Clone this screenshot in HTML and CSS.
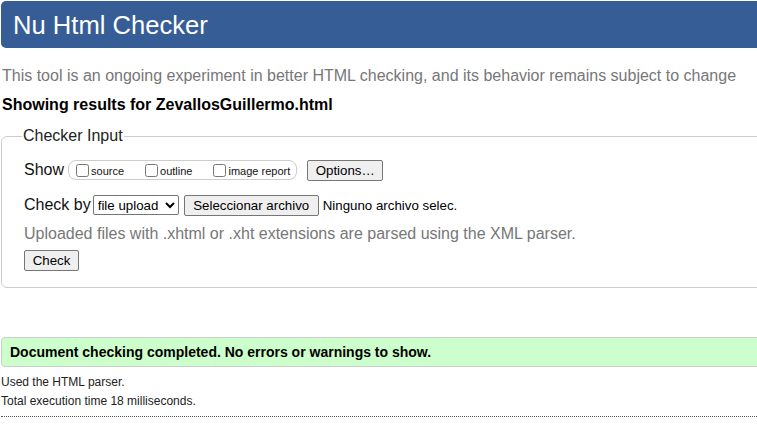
FILE: index.html
```html
<!DOCTYPE html>
<html>
<head>
<meta charset="utf-8">
<link rel="stylesheet" href="styles.css">
</head>
<body>
<div class="page">
  <h1 class="header">Nu Html Checker</h1>
  <p class="intro">This tool is an ongoing experiment in better HTML checking, and its behavior remains subject to change</p>
  <p class="showing">Showing results for ZevallosGuillermo.html</p>
  <fieldset class="input">
    <legend>Checker Input</legend>
    <div class="row show-row">
      <span class="lbl">Show</span>
      <span class="opts">
        <label class="opt"><input type="checkbox">source</label>
        <label class="opt"><input type="checkbox">outline</label>
        <label class="opt"><input type="checkbox">image report</label>
      </span>
      <button class="btn">Options…</button>
    </div>
    <div class="row by-row">
      <span class="lbl">Check by</span>
      <select class="sel"><option>file upload</option></select>
      <span class="file"><button class="btn">Seleccionar archivo</button><span class="none">Ninguno archivo selec.</span></span>
    </div>
    <p class="note">Uploaded files with .xhtml or .xht extensions are parsed using the XML parser.</p>
    <button class="btn check">Check</button>
  </fieldset>
  <p class="success">Document checking completed. No errors or warnings to show.</p>
  <p class="details first">Used the HTML parser.</p>
  <p class="details">Total execution time 18 milliseconds.</p>
  <hr class="dots">
</div>
</body>
</html>
```
FILE: styles.css
```css
html, body {
  margin: 0;
  padding: 0;
  overflow: hidden;
  background: #fff;
}
body {
  font-family: "Liberation Sans", Arial, sans-serif;
  color: #000;
}
.page {
  width: 820px;
  padding: 1px 0 0 1px;
}
.header {
  margin: 0;
  background: #365d95;
  color: #fff;
  font-weight: normal;
  font-size: 25.6px;
  line-height: 30px;
  height: 47px;
  box-sizing: border-box;
  padding: 9px 0 0 12px;
  border-radius: 5px;
}
.intro {
  margin: 18px 0 0 1px;
  font-size: 16px;
  line-height: 20px;
  color: #777;
}
.showing {
  margin: 9px 0 0 1px;
  font-size: 16px;
  line-height: 20px;
  font-weight: bold;
}
.input {
  margin: 12px 0 0 0;
  border: 1px solid #ccc;
  border-radius: 6px;
  padding: 10px 0 16px 22px;
}
.input legend {
  font-size: 16px;
  padding: 0 1px;
  color: #222;
  margin-left: -2px;
}
.row {
  display: flex;
  align-items: center;
  font-size: 16px;
}
.lbl {
  color: #111;
}
.show-row {
  height: 22px;
  margin-top: 4px;
}
.opts {
  display: inline-flex;
  align-items: center;
  margin-left: 4px;
  border: 1px solid #ccc;
  border-radius: 8px;
  height: 18px;
  padding: 0 6px 0 7px;
  gap: 21px;
}
.opt {
  display: inline-flex;
  align-items: center;
  font-size: 11px;
  color: #111;
  padding-top: 2px;
}
.opt input {
  margin: -2px 2px 0 0;
  width: 13px;
  height: 13px;
}
.btn {
  font-family: "Liberation Sans", Arial, sans-serif;
  font-size: 13.3px;
  background: #efefef;
  border: 1px solid #767676;
  border-radius: 2px;
  color: #000;
  height: 21px;
  padding: 0 6px;
}
.show-row .btn {
  margin-left: 10px;
  width: 76px;
}
.by-row {
  margin-top: 13px;
  height: 22px;
}
.sel {
  margin-left: 2px;
  font-family: "Liberation Sans", Arial, sans-serif;
  font-size: 13.3px;
  height: 20px;
  width: 86px;
  border: 1px solid #767676;
  border-radius: 2px;
  background: #fff;
  color: #000;
}
.file {
  display: inline-flex;
  align-items: center;
  margin-left: 5px;
  font-size: 13.3px;
}
.file .btn {
  width: 135px;
}
.none {
  margin-left: 4px;
}
.note {
  margin: 8px 0 0 0;
  font-size: 16px;
  line-height: 20px;
  color: #777;
}
.btn.check {
  margin-top: 6px;
  width: 55px;
  display: block;
}
.success {
  margin: 49px 0 0 0;
  background: #ccffcc;
  border: 1px solid #ccc;
  border-radius: 4px;
  height: 30px;
  box-sizing: border-box;
  padding: 6px 0 0 8px;
  font-size: 14px;
  font-weight: bold;
  line-height: 17px;
}
.details {
  margin: 0;
  padding-top: 4px;
  font-size: 12px;
  line-height: 15px;
  color: #222;
}
.details.first {
  padding-top: 8px;
}
.dots {
  margin: 7px 0 0 0;
  border: 0;
  border-top: 1px dotted #555;
  height: 0;
}
```
